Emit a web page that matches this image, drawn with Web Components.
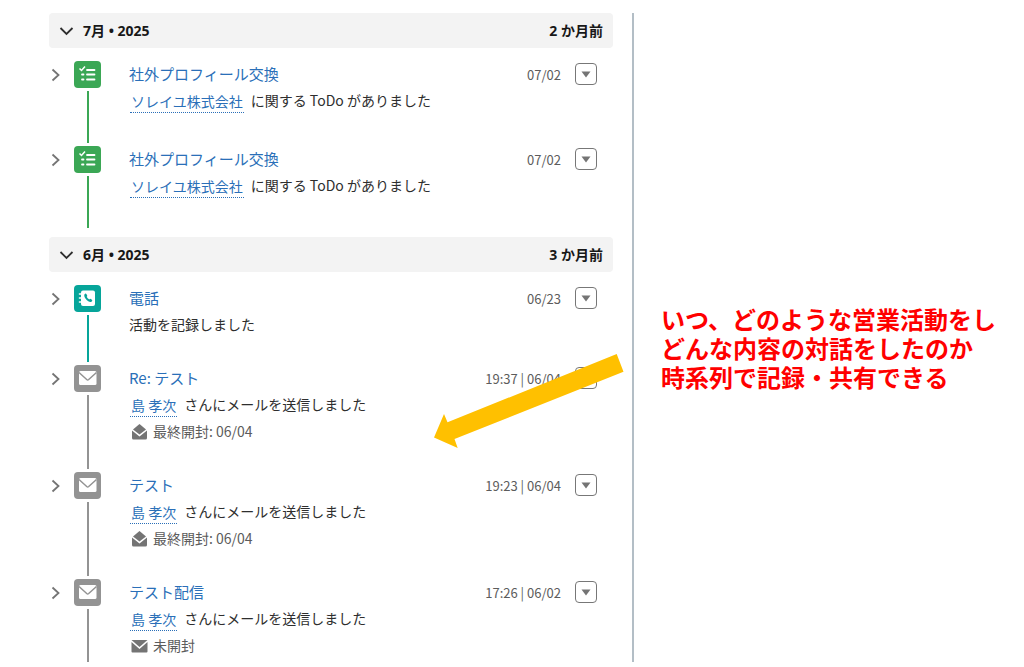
<!DOCTYPE html>
<html lang="ja">
<head>
<meta charset="utf-8">
<meta name="viewport" content="width=device-width, initial-scale=1">
<title>活動タイムライン</title>
<style>
  body { margin: 0; background: #fff; color: #2e2e2e; font: 14px/27px "Noto Sans CJK JP", sans-serif; }
</style>
</head>
<body>
<timeline-page>
  <activity-timeline slot="timeline">
    <timeline-group month="7月 • 2025" age="2 か月前">
      <timeline-item kind="task" heading="社外プロフィール交換" when="07/02"><record-link>ソレイユ株式会社</record-link> に関する ToDo がありました</timeline-item>
      <timeline-item kind="task" heading="社外プロフィール交換" when="07/02"><record-link>ソレイユ株式会社</record-link> に関する ToDo がありました</timeline-item>
    </timeline-group>
    <timeline-group month="6月 • 2025" age="3 か月前">
      <timeline-item kind="call" heading="電話" when="06/23">活動を記録しました</timeline-item>
      <timeline-item kind="mail" heading="Re: テスト" when="19:37 | 06/04"><record-link>島 孝次</record-link> さんにメールを送信しました<mail-status slot="status" state="opened">最終開封: 06/04</mail-status></timeline-item>
      <timeline-item kind="mail" heading="テスト" when="19:23 | 06/04"><record-link>島 孝次</record-link> さんにメールを送信しました<mail-status slot="status" state="opened">最終開封: 06/04</mail-status></timeline-item>
      <timeline-item kind="mail" heading="テスト配信" when="17:26 | 06/02" last><record-link>島 孝次</record-link> さんにメールを送信しました<mail-status slot="status" state="closed">未開封</mail-status></timeline-item>
    </timeline-group>
    <callout-arrow slot="callout"></callout-arrow>
  </activity-timeline>
  <timeline-note slot="note">いつ、どのような営業活動をし<br>どんな内容の対話をしたのか<br>時系列で記録・共有できる</timeline-note>
</timeline-page>

<script>
const define = (name, render) => customElements.define(name, class extends HTMLElement {
  connectedCallback() {
    if (this.shadowRoot) return;
    this.attachShadow({ mode: "open" }).innerHTML = render(this);
  }
});

const icons = {
  task: `<path d="M5.500 7.500l2 2 3.500-4" fill="none" stroke="#fff" stroke-width="1.5"/>
    <path d="M13 9h7.500M13 13.500h7.500M13 18.500h7.500M8 13.500h1.500M8 18.500h1.500" fill="none" stroke="#fff" stroke-width="1.8" stroke-linecap="round"/>`,
  call: `<rect x="7" y="5.500" width="14" height="15.500" rx="2" fill="#fff"/>
    <path d="M5.500 9h2.500M5.500 13h2.500M5.500 17h2.500" stroke="#fff" stroke-width="1.6" stroke-linecap="round"/>
    <path d="M10.500 9.200q1.300-1.300 2 0l.700 1.200q.300.600-.500 1.300.700 1.900 2.600 2.700.700-.900 1.400-.500l1.200.800q1 .800-.200 1.800-1.800 1.500-4.800-1.300-3.500-3.500-2.400-6z" fill="#06a59a"/>`,
  mail: `<rect x="5" y="6" width="17.500" height="14" rx="1.500" fill="#fff"/>
    <path d="M5 7.500l7.700 7q1 .8 2 0l7.800-7" fill="none" stroke="#939393" stroke-width="1.500"/>`
};

define("timeline-page", () => `
  <style>
    :host { display: block; }
    main { display: grid; grid-template-columns: minmax(0, 1fr) 365px; column-gap: 19px; padding: 13px 27px 5px 49px; }
    aside { display: flex; align-items: center; box-sizing: border-box; border-left: 2px solid #b3bec6; padding: 24px 0 0 27px; }
  </style>
  <main><slot name="timeline"></slot><aside><slot name="note"></slot></aside></main>`);

define("timeline-note", () => `
  <style>
    :host { display: block; color: #f00; font: 700 24px/29px "Liberation Sans", "Noto Sans CJK JP", sans-serif; white-space: nowrap; }
  </style>
  <slot></slot>`);

define("activity-timeline", () => `
  <style>
    :host { display: flex; flex-direction: column; gap: 6px; position: relative; }
  </style>
  <slot></slot><slot name="callout"></slot>`);

define("callout-arrow", () => `
  <style>
    :host { display: block; position: absolute; top: 341px; right: -11px; width: 190px; height: 94px; pointer-events: none; }
    svg { display: block; }
  </style>
  <svg width="190" height="94" viewBox="0 0 190 94" aria-hidden="true">
    <path d="M0 83.500L10 60 13.500 68.300 182.700 0 189.500 17.700 20.500 85 23.700 94z" fill="#ffc000"/>
  </svg>`);

define("timeline-group", el => `
  <style>
    :host { display: block; }
    header { display: flex; justify-content: space-between; align-items: center; height: 35px; padding: 0 10px; margin-bottom: 13px;
      background: #f3f3f3; border-radius: 4px; color: #181818; font: 700 14px/35px "Noto Sans", "Noto Sans CJK JP", sans-serif; }
    button { display: flex; align-items: center; gap: 9px; padding: 0; border: 0; background: none; color: inherit; font: inherit; }
    h2 { margin: 0; font: inherit; }
  </style>
  <header>
    <h2><button aria-expanded="true"><svg width="15" height="15" viewBox="0 0 15 15" aria-hidden="true"><path d="M1.500 5l6 6 6-6" fill="none" stroke="#2e2e2e" stroke-width="1.800"/></svg>${el.getAttribute("month")}</button></h2>
    <span>${el.getAttribute("age")}</span>
  </header>
  <slot></slot>`);

define("timeline-item", el => `
  <style>
    :host { display: grid; grid-template-columns: 25px 27px minmax(0, 1fr) auto 22px; padding-right: 16px; box-sizing: border-box; min-height: 80px; --tone: #939393; }
    :host([kind="task"]) { --tone: #3ba755; min-height: 85px; }
    :host([kind="call"]) { --tone: #06a59a; }
    :host([kind="mail"]) { min-height: 107px; }
    :host([last]) { min-height: 83px; }
    button { display: flex; align-items: center; justify-content: center; padding: 0; background: none; }
    .toggle { width: 14px; height: 27px; border: 0; }
    .rail { display: flex; flex-direction: column; align-items: center; }
    .badge { display: block; flex: none; border-radius: 4px; background: var(--tone); }
    .line { flex: 1; width: 2px; margin: 3px 0; background: var(--tone); }
    :host([last]) .line { margin-bottom: 0; }
    .content { padding-left: 28px; }
    h3 { margin: 0; font-size: 15px; font-weight: 400; line-height: 26px; }
    h3 a { color: #2a6fb8; text-decoration: none; }
    .body { display: flex; gap: 7px; white-space: nowrap; }
    time { padding-right: 14px; color: #5c5c5c; font-size: 13px; line-height: 27px; }
    .menu { width: 22px; height: 22px; margin-top: 2px; border: 1px solid #777; border-radius: 4px; background: #fff; }
  </style>
  <button class="toggle" aria-label="詳細を表示" aria-expanded="false"><svg width="10" height="14" viewBox="0 0 10 14" aria-hidden="true"><path d="M1.500 1.500L7.500 7l-6 5.500" fill="none" stroke="#747474" stroke-width="1.800"/></svg></button>
  <div class="rail">
    <svg class="badge" width="27" height="27" viewBox="0 0 27 27" aria-hidden="true">${icons[el.getAttribute("kind")]}</svg>
    <span class="line"></span>
  </div>
  <div class="content">
    <h3><a href="#">${el.getAttribute("heading")}</a></h3>
    <div class="body"><slot></slot></div>
    <slot name="status"></slot>
  </div>
  <time>${el.getAttribute("when")}</time>
  <button class="menu" aria-label="アクションを表示"><svg width="10" height="7" viewBox="0 0 10 7" aria-hidden="true"><path d="M.500.500h9L5 6.500z" fill="#747474"/></svg></button>`);

define("record-link", () => `
  <style>
    :host { display: block; margin-left: 1px; }
    a { display: block; margin-top: 3px; padding: 0 1px; border-bottom: 1px dotted #2a6fb8; color: #2a6fb8; line-height: 22px; text-decoration: none; }
  </style>
  <a href="#"><slot></slot></a>`);

define("mail-status", el => `
  <style>
    :host { display: flex; align-items: center; gap: 5px; padding-left: 2px; color: #5c5c5c; line-height: 27px; }
    svg { flex: none; }
  </style>
  <svg width="17" height="16" viewBox="0 0 17 16" aria-hidden="true">${el.getAttribute("state") === "opened"
    ? `<path d="M8.500 0L15 5.500 8.500 10.500 2 5.500z" fill="#747474"/><path d="M1 6.500l7.500 6 7.500-6V14q0 1.500-1.500 1.500h-12Q1 15.500 1 14z" fill="#747474"/>`
    : `<path d="M.500 2h16L8.500 9z" fill="#747474"/><path d="M.500 4l8 7 8-7v9.500q0 1-1 1h-14q-1 0-1-1z" fill="#747474"/>`}</svg>
  <slot></slot>`);
</script>
</body>
</html>
